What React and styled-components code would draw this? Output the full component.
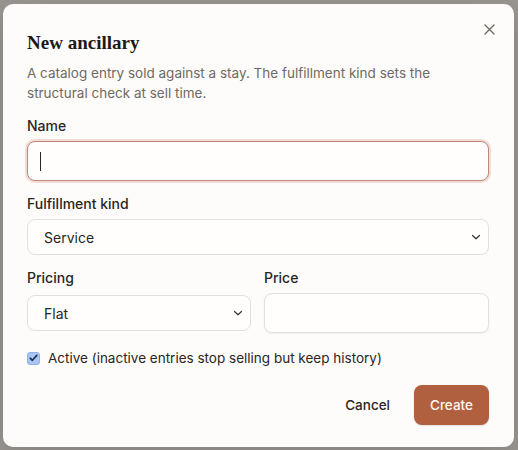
import styled, { createGlobalStyle } from "styled-components";

const GlobalStyle = createGlobalStyle`
  html, body {
    margin: 0;
    padding: 0;
    background: #9a9692;
  }
  body {
    font-family: Inter, "Noto Sans", sans-serif;
    color: #1f1b17;
  }
`;

const Backdrop = styled.div`
  width: 518px;
  height: 450px;
  box-sizing: border-box;
  padding: 4px 4px 3px 3px;
`;

const Dialog = styled.div`
  position: relative;
  box-sizing: border-box;
  height: 100%;
  background: #fdfcfa;
  border-radius: 10px;
  padding: 26px 25px 22px 24px;
  display: flex;
  flex-direction: column;
  box-shadow: 0 8px 30px rgba(0, 0, 0, 0.15);
`;

const Close = styled.button`
  position: absolute;
  top: 15px;
  right: 15px;
  width: 20px;
  height: 20px;
  border: none;
  background: none;
  padding: 0;
  display: flex;
  align-items: center;
  justify-content: center;
  color: #6e6862;
`;

const Title = styled.h2`
  margin: 0;
  font-family: "Liberation Serif", serif;
  font-weight: 700;
  font-size: 19px;
  line-height: 26px;
  color: #1d1915;
`;

const Description = styled.p`
  margin: 7px 0 0;
  font-size: 13.5px;
  line-height: 20px;
  color: #6f6a64;
`;

const Field = styled.div`
  display: flex;
  flex-direction: column;
  margin-top: 13px;
`;

const Label = styled.label`
  font-size: 14px;
  line-height: 20px;
  font-weight: 500;
  color: #2a2622;
  margin-bottom: 5px;
`;

const InputWrap = styled.div`
  position: relative;
`;

const Input = styled.input`
  box-sizing: border-box;
  width: 100%;
  height: 40px;
  border-radius: 8px;
  border: 1px solid ${(p) => (p.$focused ? "#c0877a" : "#e3dfda")};
  box-shadow: ${(p) =>
    p.$focused
      ? "0 0 0 2px rgba(214, 160, 150, 0.35)"
      : "0 1px 2px rgba(0,0,0,0.06)"};
  background: #fffefd;
  padding: 0 12px;
  font: inherit;
  font-size: 14px;
  outline: none;
`;

const Caret = styled.span`
  position: absolute;
  left: 13px;
  top: 11px;
  width: 1px;
  height: 19px;
  background: #2a2622;
`;

const SelectWrap = styled.div`
  position: relative;
  display: flex;
  align-items: center;
  height: ${(p) => p.$height || 36}px;
`;

const Select = styled.select`
  appearance: none;
  box-sizing: border-box;
  width: 100%;
  height: 36px;
  border-radius: 8px;
  border: 1px solid #e3dfda;
  background: #fffefd;
  padding: 0 16px;
  font: inherit;
  font-size: 14px;
  color: #2a2622;
  outline: none;
`;

const Chevron = styled.svg`
  position: absolute;
  right: 8px;
  top: 50%;
  margin-top: -4px;
  pointer-events: none;
`;

const Row = styled.div`
  display: grid;
  grid-template-columns: 224px 1fr;
  column-gap: 13px;
  margin-top: 13px;
`;

const Column = styled.div`
  display: flex;
  flex-direction: column;
`;

const CheckRow = styled.label`
  display: flex;
  align-items: center;
  gap: 8px;
  margin-top: 15px;
  font-size: 13.5px;
  line-height: 20px;
  color: #2a2622;
`;

const Box = styled.span`
  width: 13px;
  height: 13px;
  border-radius: 3px;
  background: #a9c6f2;
  border: 1px solid #8fb2e6;
  box-sizing: border-box;
  display: flex;
  align-items: center;
  justify-content: center;
`;

const Footer = styled.div`
  display: flex;
  justify-content: flex-end;
  gap: 8px;
  margin-top: 17px;
`;

const Button = styled.button`
  height: 40px;
  padding: 0 16px;
  border-radius: 8px;
  border: none;
  font: inherit;
  font-size: 13.5px;
  font-weight: 500;
  color: ${(p) => (p.$primary ? "#fff7f2" : "#2a2622")};
  background: ${(p) => (p.$primary ? "#b1603f" : "transparent")};
  box-shadow: ${(p) => (p.$primary ? "0 1px 2px rgba(0,0,0,0.12)" : "none")};
`;

const ChevronIcon = () => (
  <Chevron width="10" height="8" viewBox="0 0 10 8">
    <path d="M1.5 2.5 L5 5.8 L8.5 2.5" fill="none" stroke="#3a3530" strokeWidth="1.2" strokeLinecap="round" strokeLinejoin="round" />
  </Chevron>
);

export default function App() {
  return (
    <>
      <GlobalStyle />
      <Backdrop>
        <Dialog>
          <Close aria-label="Close">
            <svg width="11" height="11" viewBox="0 0 11 11">
              <path d="M1 1 L10 10 M10 1 L1 10" stroke="currentColor" strokeWidth="1.3" strokeLinecap="round" />
            </svg>
          </Close>
          <Title>New ancillary</Title>
          <Description>
            A catalog entry sold against a stay. The fulfillment kind sets the structural check at sell time.
          </Description>
          <Field>
            <Label>Name</Label>
            <InputWrap>
              <Input $focused />
              <Caret />
            </InputWrap>
          </Field>
          <Field>
            <Label>Fulfillment kind</Label>
            <SelectWrap>
              <Select defaultValue="service">
                <option value="service">Service</option>
                <option value="item">Item</option>
              </Select>
              <ChevronIcon />
            </SelectWrap>
          </Field>
          <Row>
            <Column>
              <Label>Pricing</Label>
              <SelectWrap $height={40}>
                <Select defaultValue="flat">
                  <option value="flat">Flat</option>
                  <option value="per-night">Per night</option>
                </Select>
                <ChevronIcon />
              </SelectWrap>
            </Column>
            <Column>
              <Label>Price</Label>
              <Input />
            </Column>
          </Row>
          <CheckRow>
            <Box>
              <svg width="9" height="8" viewBox="0 0 9 8">
                <path d="M1.2 4.2 L3.4 6.3 L7.8 1.4" fill="none" stroke="#1b2a4a" strokeWidth="1.6" strokeLinecap="round" strokeLinejoin="round" />
              </svg>
            </Box>
            Active (inactive entries stop selling but keep history)
          </CheckRow>
          <Footer>
            <Button>Cancel</Button>
            <Button $primary>Create</Button>
          </Footer>
        </Dialog>
      </Backdrop>
    </>
  );
}
